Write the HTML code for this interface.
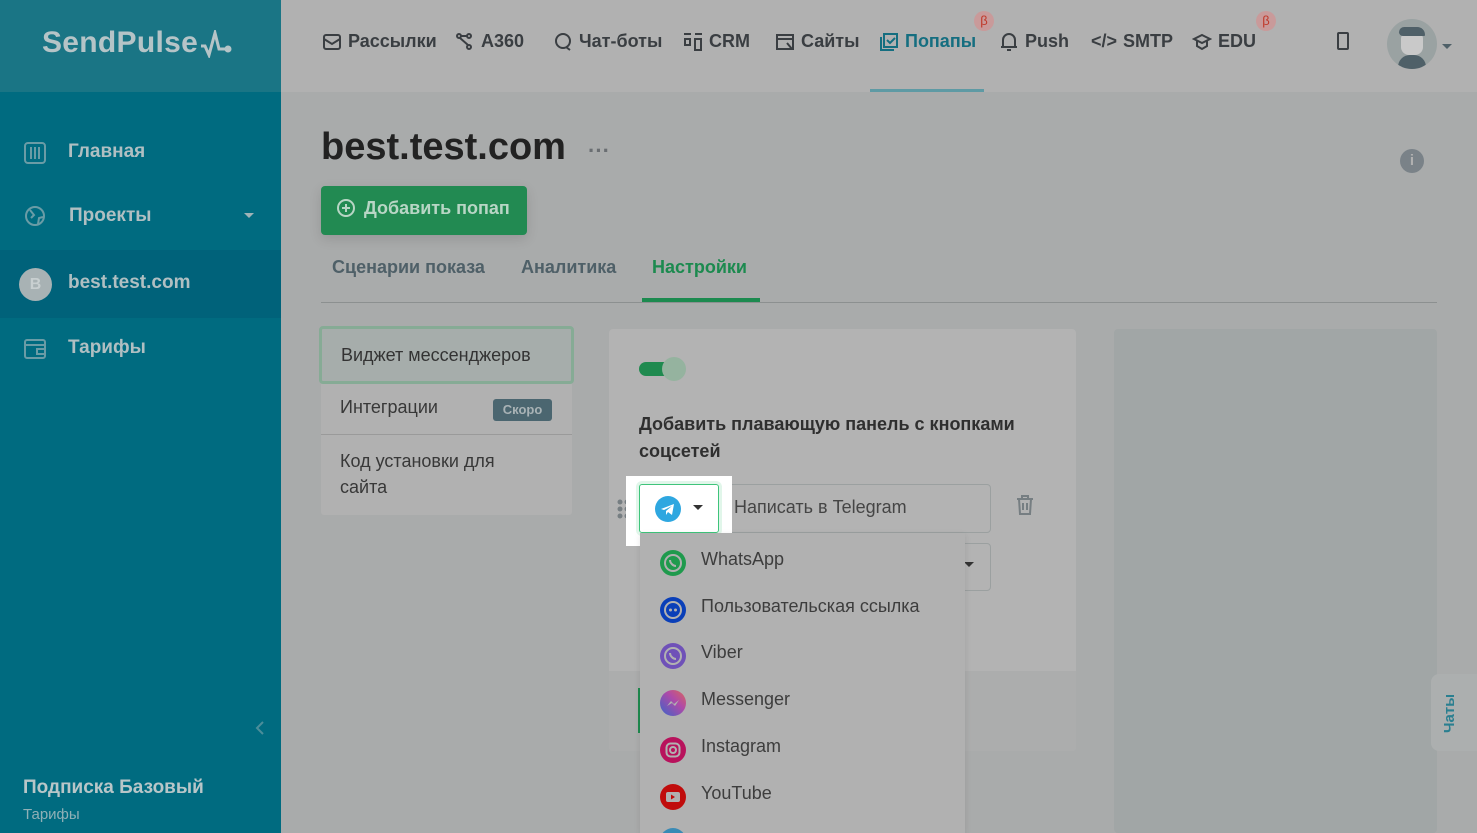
<!DOCTYPE html>
<html style="overflow:hidden"><head><meta charset="utf-8"><style>
*{box-sizing:border-box;margin:0;padding:0}
html,body{width:1477px;height:833px;overflow:hidden}
body{background:#a9abab;font-family:"Liberation Sans",sans-serif;color:#333}
#w{position:relative;width:1477px;height:833px;overflow:hidden;background:#a9abab}
.a{position:absolute}
.sb{left:0;top:0;width:281px;height:833px;background:#006b80}
.logo{left:0;top:0;width:281px;height:92px;background:#1a7585}
.nav{left:0;width:281px;color:#b0bfc2;font-weight:bold;font-size:19px}
.hdr{left:281px;top:0;width:1196px;height:92px;background:#b1b1b1}
.ni{top:31px;font-size:18px;color:#3a3e42;display:flex;align-items:center;gap:6px}
.ni svg{width:20px;height:20px}
.beta{width:20px;height:20px;border-radius:50%;background:#c99a9a;color:#c0392b;font-size:13px;text-align:center;line-height:20px}
.dd{font-size:18px;color:#3d3d3d}
.ic{width:26px;height:26px;border-radius:50%}
</style></head><body><div id="w">
<div class="a sb"></div>
<div class="a logo"></div>
<div class="a" style="left:42px;top:26px;color:#b5c4c7;font-size:30px;font-weight:bold;letter-spacing:.3px">SendPulse</div>
<svg class="a" style="left:199px;top:30px" width="34" height="28" viewBox="0 0 34 28" fill="none" stroke="#b5c4c7" stroke-width="3"><path d="M2 16h4l4 9 6-22 4 16h6"/><circle cx="29" cy="19" r="2" fill="#b5c4c7"/></svg>
<div class="a nav" style="top:141px;padding-left:68px;">Главная</div>
<svg class="a" style="left:24px;top:142px" width="22" height="22" viewBox="0 0 22 22" fill="none" stroke="#6a9ca6" stroke-width="2"><rect x="1" y="1" width="20" height="20" rx="3"/><path d="M7 5v12M11 5v12M15 5v12"/></svg>
<div class="a nav" style="top:205px;padding-left:69px;">Проекты</div>
<svg class="a" style="left:24px;top:205px" width="22" height="22" viewBox="0 0 22 22" fill="none" stroke="#6a9ca6" stroke-width="2"><circle cx="11" cy="11" r="9"/><path d="M6 5l4 5-3 3M14 19l1-6 4-1"/></svg>
<div class="a" style="left:244px;top:213px;border:5px solid transparent;border-top-color:#9fb3b7"></div>
<div class="a" style="left:0;top:250px;width:281px;height:68px;background:#00627a"></div>
<div class="a" style="left:19px;top:268px;width:33px;height:33px;border-radius:50%;background:#a8b2b4;color:#c8cfd0;font-weight:bold;text-align:center;line-height:33px">B</div>
<div class="a nav" style="top:272px;padding-left:68px;">best.test.com</div>
<div class="a nav" style="top:337px;padding-left:68px;">Тарифы</div>
<svg class="a" style="left:24px;top:338px" width="22" height="22" viewBox="0 0 22 22" fill="none" stroke="#6a9ca6" stroke-width="2"><rect x="1" y="2" width="20" height="18" rx="2"/><path d="M1 7h20M13 11h8v5h-8z"/></svg>
<svg class="a" style="left:255px;top:720px" width="10" height="16" viewBox="0 0 10 16" fill="none" stroke="#4c8e9a" stroke-width="2"><path d="M8 2L2 8l6 6"/></svg>
<div class="a" style="left:23px;top:777px;color:#b8c6c8;font-weight:bold;font-size:19px">Подписка Базовый</div>
<div class="a" style="left:23px;top:806px;color:#8fb0b6;font-size:15px">Тарифы</div>

<div class="a hdr"></div>
<div class="a ni" style="left:322px;font-weight:bold"><svg viewBox="0 0 20 20" fill="none" stroke="#3a3e42" stroke-width="2"><rect x="2" y="3" width="16" height="14" rx="2"/><path d="M2 7l8 5 8-5"/></svg>Рассылки</div>
<div class="a ni" style="left:455px;font-weight:bold"><svg viewBox="0 0 20 20" fill="none" stroke="#3a3e42" stroke-width="2"><circle cx="4" cy="4" r="2"/><circle cx="14" cy="4" r="2"/><circle cx="14" cy="15" r="2"/><path d="M6 4h6M5 6l8 7"/></svg>A360</div>
<div class="a ni" style="left:553px;font-weight:bold"><svg viewBox="0 0 20 20" fill="none" stroke="#3a3e42" stroke-width="2"><circle cx="10" cy="9" r="7"/><path d="M13 15l4 3"/></svg>Чат-боты</div>
<div class="a ni" style="left:683px;font-weight:bold"><svg viewBox="0 0 20 20" fill="none" stroke="#3a3e42" stroke-width="2"><path d="M1 2h7M12 2h7"/><rect x="2" y="7" width="5" height="6"/><rect x="12" y="7" width="6" height="11"/></svg>CRM</div>
<div class="a ni" style="left:775px;font-weight:bold"><svg viewBox="0 0 20 20" fill="none" stroke="#3a3e42" stroke-width="2"><rect x="2" y="3" width="16" height="14"/><path d="M2 7h16M12 11l5 6"/></svg>Сайты</div>
<div class="a ni" style="left:879px;color:#156e80;font-weight:bold"><svg viewBox="0 0 20 20" fill="none" stroke="#156e80" stroke-width="2"><rect x="5" y="2" width="13" height="13"/><path d="M2 5v13h13M8 8l3 3 5-5"/></svg>Попапы</div>
<div class="a beta" style="left:974px;top:11px">β</div>
<div class="a" style="left:870px;top:89px;width:114px;height:3px;background:#5e9aa4"></div>
<div class="a ni" style="left:999px;font-weight:bold"><svg viewBox="0 0 20 20" fill="none" stroke="#3a3e42" stroke-width="2"><path d="M4 15V8a6 6 0 0112 0v7zM2 15h16M8 18h4"/></svg>Push</div>
<div class="a ni" style="left:1091px;font-weight:bold"><span>&lt;/&gt;</span>SMTP</div>
<div class="a ni" style="left:1192px;font-weight:bold"><svg viewBox="0 0 20 20" fill="none" stroke="#3a3e42" stroke-width="2"><path d="M10 3l8 4-8 4-8-4zM5 9v5l5 3 5-3V9"/></svg>EDU</div>
<div class="a beta" style="left:1256px;top:11px">β</div>
<div class="a" style="left:1337px;top:32px;width:12px;height:18px;border:2px solid #3a3e42;border-radius:2px"></div>
<div class="a" style="left:1387px;top:19px;width:50px;height:50px;border-radius:50%;background:#9aa2a2;overflow:hidden"><div style="position:absolute;left:11px;top:36px;width:28px;height:20px;border-radius:12px 12px 0 0;background:#4f6068"></div><div style="position:absolute;left:14px;top:12px;width:22px;height:24px;border-radius:8px;background:#c9c9c9"></div><div style="position:absolute;left:12px;top:8px;width:26px;height:9px;border-radius:8px 12px 2px 6px;background:#4f6068"></div></div>
<div class="a" style="left:1442px;top:44px;border:5px solid transparent;border-top-color:#4f6068"></div>

<div class="a" style="left:321px;top:126px;font-size:38px;font-weight:bold;color:#222">best.test.com</div>
<div class="a" style="left:588px;top:138px;font-size:22px;color:#6a6e72;font-weight:bold">···</div>
<div class="a" style="left:1400px;top:149px;width:24px;height:24px;border-radius:50%;background:#7a8288;color:#b1b1b1;text-align:center;font-weight:bold;line-height:24px;font-size:15px">i</div>
<div class="a" style="left:321px;top:186px;width:206px;height:49px;background:#228a52;border-radius:4px;box-shadow:0 4px 12px rgba(0,0,0,.12)"></div>
<svg class="a" style="left:336px;top:198px" width="20" height="20" viewBox="0 0 20 20" fill="none" stroke="#b8d6c5" stroke-width="2"><circle cx="10" cy="10" r="8"/><path d="M10 6v8M6 10h8"/></svg>
<div class="a" style="left:364px;top:198px;color:#b8d6c5;font-weight:bold;font-size:18px">Добавить попап</div>
<div class="a" style="left:332px;top:257px;font-size:18px;font-weight:bold;color:#4f6068">Сценарии показа</div>
<div class="a" style="left:521px;top:257px;font-size:18px;font-weight:bold;color:#4f6068">Аналитика</div>
<div class="a" style="left:652px;top:257px;font-size:18px;font-weight:bold;color:#1c8a4f">Настройки</div>
<div class="a" style="left:321px;top:302px;width:1116px;height:1px;background:#8c9090"></div>
<div class="a" style="left:642px;top:298px;width:118px;height:4px;background:#1c8a4f"></div>

<div class="a" style="left:321px;top:328px;width:251px;height:187px;background:#b1b1b1;border-radius:3px"></div>
<div class="a" style="left:319px;top:326px;width:255px;height:58px;background:#a6adab;border:3px solid #86ab95;border-radius:4px;padding:16px 19px;font-size:18px;color:#333">Виджет мессенджеров</div>
<div class="a" style="left:340px;top:397px;font-size:18px;color:#383838">Интеграции</div>
<div class="a" style="left:493px;top:399px;width:59px;height:22px;background:#4b6670;border-radius:3px;color:#a9b3b6;font-size:13px;font-weight:bold;text-align:center;line-height:22px">Скоро</div>
<div class="a" style="left:321px;top:434px;width:251px;height:1px;background:#9a9a9a"></div>
<div class="a" style="left:340px;top:448px;font-size:18px;color:#383838;line-height:26px">Код установки для<br>сайта</div>

<div class="a" style="left:609px;top:329px;width:467px;height:422px;background:#b3b3b3;border-radius:4px"></div>
<div class="a" style="left:609px;top:671px;width:467px;height:80px;background:#acadad;border-radius:0 0 4px 4px"></div>
<div class="a" style="left:639px;top:362px;width:32px;height:14px;border-radius:7px;background:#1f8a4f"></div>
<div class="a" style="left:662px;top:357px;width:24px;height:24px;border-radius:50%;background:#95b39f"></div>
<div class="a" style="left:639px;top:411px;font-size:18px;font-weight:bold;color:#2f2f2f;line-height:27px">Добавить плавающую панель с кнопками<br>соцсетей</div>
<div class="a" style="left:640px;top:484px;width:351px;height:49px;border:1px solid #9ba0a0;border-radius:4px"></div>
<div class="a" style="left:734px;top:497px;font-size:18px;color:#454545">Написать в Telegram</div>
<div class="a" style="left:640px;top:543px;width:351px;height:48px;border:1px solid #9ba0a0;border-radius:4px"></div>
<div class="a" style="left:964px;top:562px;border:5px solid transparent;border-top-color:#333"></div>
<svg class="a" style="left:1015px;top:494px" width="20" height="22" viewBox="0 0 20 22" fill="none" stroke="#767e82" stroke-width="2"><path d="M2 5h16M7 5V2h6v3M4 5l1 15h10l1-15M8 9v7M12 9v7"/></svg>
<svg class="a" style="left:617px;top:499px" width="14" height="20"><g fill="#767e82"><circle cx="3" cy="3" r="2.5"/><circle cx="10" cy="3" r="2.5"/><circle cx="3" cy="10" r="2.5"/><circle cx="10" cy="10" r="2.5"/><circle cx="3" cy="17" r="2.5"/><circle cx="10" cy="17" r="2.5"/></g></svg>
<div class="a" style="left:638px;top:688px;width:2px;height:45px;background:#1f8a4f"></div>

<div class="a" style="left:626px;top:476px;width:106px;height:70px;background:#fff"></div>
<div class="a" style="left:639px;top:484px;width:80px;height:49px;border:1px solid #3fc47b;border-radius:3px;box-shadow:0 0 0 3px #e1f6ea"></div>
<div class="a ic" style="left:655px;top:496px;background:#2ea7e0"></div>
<svg class="a" style="left:659px;top:501px" width="18" height="16" viewBox="0 0 18 16"><path d="M2 8l13-5-2 11-4-3-2 3v-4l6-5-8 4z" fill="#fff"/></svg>
<div class="a" style="left:693px;top:505px;border:5px solid transparent;border-top-color:#333"></div>

<div class="a" style="left:640px;top:533px;width:325px;height:300px;background:#b1b1b1;box-shadow:0 2px 6px rgba(0,0,0,.1)"></div>
<svg class="a" style="left:660px;top:550px" width="26" height="26" viewBox="0 0 26 26"><circle cx="13" cy="13" r="13" fill="#1f9a4d"/><circle cx="13" cy="13" r="8" fill="none" stroke="#b1b1b1" stroke-width="2"/><path d="M10 10c0 3 3 6 6 6" stroke="#b1b1b1" stroke-width="2" fill="none"/></svg>
<div class="a dd" style="left:701px;top:549px">WhatsApp</div>
<svg class="a" style="left:660px;top:597px" width="26" height="26" viewBox="0 0 26 26"><circle cx="13" cy="13" r="13" fill="#0a3fb8"/><circle cx="13" cy="13" r="8" fill="none" stroke="#b1b1b1" stroke-width="2"/><circle cx="10.5" cy="13" r="1.5" fill="#b1b1b1"/><circle cx="15.5" cy="13" r="1.5" fill="#b1b1b1"/></svg>
<div class="a dd" style="left:701px;top:596px">Пользовательская ссылка</div>
<svg class="a" style="left:660px;top:643px" width="26" height="26" viewBox="0 0 26 26"><circle cx="13" cy="13" r="13" fill="#6f51b8"/><circle cx="13" cy="13" r="8" fill="none" stroke="#b1b1b1" stroke-width="2"/><path d="M10 10c0 3 3 6 6 6" stroke="#b1b1b1" stroke-width="2" fill="none"/></svg>
<div class="a dd" style="left:701px;top:642px">Viber</div>
<svg class="a" style="left:660px;top:690px" width="26" height="26" viewBox="0 0 26 26"><defs><linearGradient id="m" x1="0" y1="1" x2="1" y2="0"><stop offset="0" stop-color="#3a64c8"/><stop offset=".6" stop-color="#b04aa8"/><stop offset="1" stop-color="#d8685a"/></linearGradient></defs><circle cx="13" cy="13" r="13" fill="url(#m)"/><path d="M7 16l4-5 3 3 5-4-4 6-3-3z" fill="#b1b1b1"/></svg>
<div class="a dd" style="left:701px;top:689px">Messenger</div>
<svg class="a" style="left:660px;top:737px" width="26" height="26" viewBox="0 0 26 26"><circle cx="13" cy="13" r="13" fill="#b8125c"/><rect x="6.5" y="6.5" width="13" height="13" rx="4" fill="none" stroke="#b1b1b1" stroke-width="2"/><circle cx="13" cy="13" r="3" fill="none" stroke="#b1b1b1" stroke-width="2"/></svg>
<div class="a dd" style="left:701px;top:736px">Instagram</div>
<svg class="a" style="left:660px;top:784px" width="26" height="26" viewBox="0 0 26 26"><circle cx="13" cy="13" r="13" fill="#c00c0c"/><rect x="6" y="8" width="14" height="10" rx="2" fill="#b1b1b1"/><path d="M11 10.5v5l4-2.5z" fill="#c00c0c"/></svg>
<div class="a dd" style="left:701px;top:783px">YouTube</div>
<div class="a ic" style="left:660px;top:828px;background:#3a8ab5"></div>

<div class="a" style="left:1114px;top:329px;width:323px;height:504px;background:#a1a6a6;border-radius:4px"></div>
<div class="a" style="left:1431px;top:674px;width:46px;height:77px;background:#acafaf;border-radius:8px 0 0 8px"></div>
<div class="a" style="left:1441px;top:733px;color:#2a7f90;font-weight:bold;font-size:15px;transform:rotate(-90deg);transform-origin:left top">Чаты</div>
</div></body></html>
